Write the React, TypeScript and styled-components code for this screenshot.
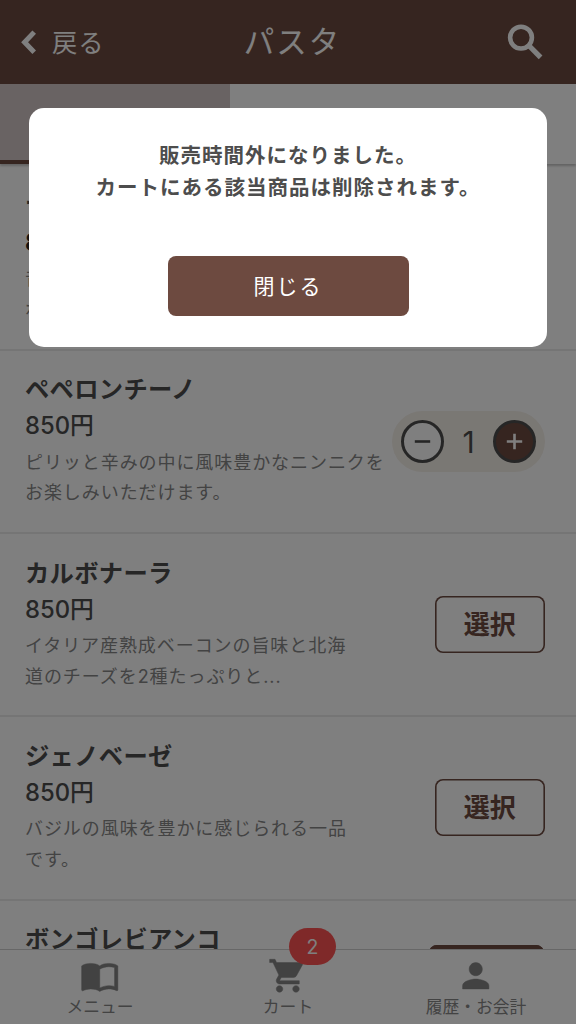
import React from "react";
import styled, { createGlobalStyle, css } from "styled-components";

const brown = "#6d4a40";
const ink = "#4d4d4d";

const GlobalStyle = createGlobalStyle`
  * { box-sizing: border-box; }
  body {
    margin: 0;
    background: #fff;
    color: ${ink};
    font-family: Inter, "Noto Sans CJK JP", sans-serif;
  }
  button { font: inherit; color: inherit; padding: 0; border: 0; background: none; }
`;

const Screen = styled.div`
  position: relative;
  width: 576px;
  height: 1024px;
  overflow: hidden;
  display: flex;
  flex-direction: column;
  background: #fff;
`;

const Header = styled.header`
  flex: none;
  height: 84px;
  display: grid;
  grid-template-columns: 150px 1fr 150px;
  align-items: center;
  padding: 0 21px;
  background: ${brown};
  color: #fff;
`;

const BackButton = styled.button`
  display: flex;
  align-items: center;
  gap: 16px;
  color: #fff;
  font-size: 25.3px;
  line-height: 36px;
  letter-spacing: 1px;
`;

const BackLabel = styled.span`
  padding-top: 2px;
`;

const Title = styled.h1`
  margin: 0;
  padding-left: 9px;
  text-align: center;
  font-size: 30.5px;
  line-height: 44px;
  font-weight: 400;
  letter-spacing: 2px;
`;

const SearchButton = styled.button`
  justify-self: end;
  display: flex;
  margin-right: 12px;
  color: #fff;
`;

const Tabs = styled.nav`
  flex: none;
  display: flex;
  height: 80px;
  box-shadow: 0 2px 2px rgba(0, 0, 0, 0.22);
`;

const Tab = styled.div<{ $active?: boolean }>`
  width: 230.4px;
  ${(p) => p.$active && css`
    background: #d3c7c7;
    border-bottom: 4px solid ${brown};
  `}
`;

const List = styled.main`
  flex: 1;
  min-height: 0;
  overflow: hidden;
  padding-top: 3.5px;
`;

const Item = styled.section`
  height: 183.3px;
  display: flex;
  justify-content: space-between;
  padding: 0 31px 0 25px;
  border-bottom: 2px solid #eaeaea;
`;

const Info = styled.div`
  flex: none;
  padding-top: 19.5px;
  white-space: nowrap;
`;

const Name = styled.h2`
  margin: 0;
  font-size: 24.3px;
  line-height: 38px;
  font-weight: 700;
  letter-spacing: 0.3px;
`;

const Price = styled.div<{ $strong?: boolean }>`
  font-size: 23.8px;
  line-height: 35.4px;
  font-weight: ${(p) => (p.$strong ? 700 : 450)};
  color: ${(p) => (p.$strong ? "#222" : ink)};
`;

const Description = styled.p`
  margin: 0;
  padding-top: 4px;
  font-size: 18px;
  line-height: 30.5px;
  letter-spacing: 0.93px;
  color: #868686;
`;

const Action = styled.div<{ $top?: number }>`
  flex: none;
  padding-top: ${(p) => p.$top ?? 61}px;
`;

const SelectButton = styled.button<{ $filled?: boolean }>`
  display: block;
  width: ${(p) => (p.$filled ? 115 : 110.5)}px;
  height: 57.5px;
  margin-right: ${(p) => (p.$filled ? 1.5 : 0)}px;
  border-radius: 8px;
  box-shadow: inset 0 0 0 1.6px ${brown};
  background: ${(p) => (p.$filled ? brown : "#fff")};
  color: ${(p) => (p.$filled ? "#fff" : brown)};
  font-size: 26px;
  font-weight: 700;
  line-height: 58px;
`;

const Stepper = styled.div`
  margin-left: -10px;
  width: 153px;
  height: 61px;
  display: flex;
  align-items: center;
  justify-content: space-between;
  padding: 0 9px;
  border-radius: 31px;
  background: #f5f0e9;
`;

const RoundButton = styled.button<{ $filled?: boolean }>`
  width: 43px;
  height: 43px;
  display: flex;
  align-items: center;
  justify-content: center;
  border: 3px solid ${ink};
  border-radius: 50%;
  background: ${(p) => (p.$filled ? brown : "#fff")};
  color: ${(p) => (p.$filled ? "#fff" : ink)};
`;

const Count = styled.span`
  padding-top: 2px;
  font-size: 30px;
  line-height: 44px;
`;

const BottomNav = styled.nav`
  flex: none;
  height: 75px;
  display: grid;
  grid-template-columns: repeat(3, 188px);
  justify-content: center;
  border-top: 1px solid #cfcfcf;
  background: #fff;
`;

const NavItem = styled.div`
  position: relative;
  display: flex;
  flex-direction: column;
  align-items: center;
  justify-content: flex-end;
  padding-bottom: 5px;
  color: #868686;
  font-size: 16.8px;
  line-height: 24px;
`;

const NavSvg = styled.svg`
  display: block;
  width: 39.5px;
  height: 39.5px;
  fill: #848484;
  stroke: #848484;
  stroke-width: 0.3;
`;

const Badge = styled.span`
  position: absolute;
  top: -22px;
  left: 95px;
  width: 47px;
  height: 37px;
  border-radius: 19px;
  background: #ff5353;
  color: #fff;
  text-align: center;
  font-size: 19.5px;
  line-height: 38px;
`;

const Overlay = styled.div`
  position: absolute;
  inset: 0;
  display: flex;
  align-items: flex-start;
  justify-content: center;
  padding-top: 107.5px;
  background: rgba(0, 0, 0, 0.5);
`;

const Dialog = styled.div`
  width: 518.5px;
  height: 239.5px;
  display: flex;
  flex-direction: column;
  align-items: center;
  padding-top: 32.2px;
  border-radius: 15px;
  background: #fff;
`;

const Message = styled.p`
  margin: 0;
  text-align: center;
  font-size: 20.5px;
  line-height: 32.3px;
  font-weight: 700;
  letter-spacing: 1px;
  white-space: nowrap;
`;

const CloseButton = styled.button`
  margin-top: 52px;
  width: 241px;
  height: 60px;
  border-radius: 8px;
  background: ${brown};
  color: #fff;
  font-size: 21px;
  line-height: 61px;
  letter-spacing: 2px;
`;

type Food = {
  name: string;
  lines: string[];
  control: "none" | "stepper" | "select" | "filled";
  strong?: boolean;
};

const foods: Food[] = [
  { name: "ナポリタン", lines: ["昔ながらの", "ポークソーセージ"], control: "none", strong: true },
  { name: "ペペロンチーノ", lines: ["ピリッと辛みの中に風味豊かなニンニクを", "お楽しみいただけます。"], control: "stepper" },
  { name: "カルボナーラ", lines: ["イタリア産熟成ベーコンの旨味と北海", "道のチーズを2種たっぷりと..."], control: "select" },
  { name: "ジェノベーゼ", lines: ["バジルの風味を豊かに感じられる一品", "です。"], control: "select" },
  { name: "ボンゴレビアンコ", lines: [], control: "filled" },
];

const navPaths = {
  menu: "M21 5c-1.11-.35-2.33-.5-3.5-.5-1.95 0-4.05.4-5.5 1.5-1.45-1.1-3.55-1.5-5.5-1.5S2.45 4.9 1 6v14.65c0 .25.25.5.5.5.1 0 .15-.05.25-.05C3.1 20.45 5.05 20 6.5 20c1.95 0 4.05.4 5.5 1.5 1.35-.85 3.8-1.5 5.5-1.5 1.65 0 3.35.3 4.75 1.05.1.05.15.05.25.05.25 0 .5-.25.5-.5V6c-.6-.45-1.25-.75-2-1zm0 13.5c-1.1-.35-2.3-.5-3.5-.5-1.7 0-4.15.65-5.5 1.5V8c1.35-.85 3.8-1.5 5.5-1.5 1.2 0 2.4.15 3.5.5v11.5z",
  cart: "M7 18c-1.1 0-1.99.9-1.99 2S5.9 22 7 22s2-.9 2-2-.9-2-2-2zM1 2v2h2l3.6 7.59-1.35 2.45c-.16.28-.25.61-.25.96 0 1.1.9 2 2 2h12v-2H7.42c-.14 0-.25-.11-.25-.25l.03-.12.9-1.63h7.45c.75 0 1.41-.41 1.75-1.03l3.58-6.49c.08-.14.12-.31.12-.48 0-.55-.45-1-1-1H5.21l-.94-2H1zm16 16c-1.1 0-1.99.9-1.99 2s.89 2 1.99 2 2-.9 2-2-.9-2-2-2z",
  person: "M12 12c2.21 0 4-1.79 4-4s-1.79-4-4-4-4 1.79-4 4 1.79 4 4 4zm0 2c-2.67 0-8 1.34-8 4v2h16v-2c0-2.66-5.33-4-8-4z",
};

function NavIcon({ name }: { name: keyof typeof navPaths }) {
  return (
    <NavSvg viewBox="0 0 24 24">
      <path d={navPaths[name]} />
    </NavSvg>
  );
}

function Sign({ plus }: { plus?: boolean }) {
  return (
    <svg width="17" height="17" viewBox="0 0 17 17" fill="none" stroke="currentColor" strokeWidth="2.6">
      <path d={plus ? "M.8 8.5h15.4M8.5.8v15.4" : "M.8 8.5h15.4"} />
    </svg>
  );
}

function Control({ kind }: { kind: Food["control"] }) {
  if (kind === "none") return null;
  if (kind === "stepper") {
    return (
      <Action $top={60}>
        <Stepper>
          <RoundButton><Sign /></RoundButton>
          <Count>1</Count>
          <RoundButton $filled><Sign plus /></RoundButton>
        </Stepper>
      </Action>
    );
  }
  return (
    <Action $top={kind === "filled" ? 44.5 : 61.5}>
      <SelectButton $filled={kind === "filled"}>選択</SelectButton>
    </Action>
  );
}

export default function App() {
  return (
    <>
      <GlobalStyle />
      <Screen>
        <Header>
          <BackButton>
            <svg width="15" height="24" viewBox="0 0 15 24" fill="none" stroke="currentColor" strokeWidth="5">
              <path d="M13.2 2.1 3.6 12.2l9.6 10" />
            </svg>
            <BackLabel>戻る</BackLabel>
          </BackButton>
          <Title>パスタ</Title>
          <SearchButton>
            <svg width="36" height="36" viewBox="0 0 36 36" fill="none" stroke="currentColor">
              <circle cx="14" cy="13.6" r="10.9" strokeWidth="4.6" />
              <path d="M21.6 21.2 33.6 33.4" strokeWidth="5.2" />
            </svg>
          </SearchButton>
        </Header>
        <Tabs>
          <Tab $active />
          <Tab />
        </Tabs>
        <List>
          {foods.map((food) => (
            <Item key={food.name}>
              <Info>
                <Name>{food.name}</Name>
                <Price $strong={food.strong}>850円</Price>
                <Description>
                  {food.lines.map((line) => (
                    <React.Fragment key={line}>{line}<br /></React.Fragment>
                  ))}
                </Description>
              </Info>
              <Control kind={food.control} />
            </Item>
          ))}
        </List>
        <BottomNav>
          <NavItem><NavIcon name="menu" />メニュー</NavItem>
          <NavItem><NavIcon name="cart" />カート<Badge>2</Badge></NavItem>
          <NavItem><NavIcon name="person" />履歴・お会計</NavItem>
        </BottomNav>
        <Overlay>
          <Dialog>
            <Message>販売時間外になりました。<br />カートにある該当商品は削除されます。</Message>
            <CloseButton>閉じる</CloseButton>
          </Dialog>
        </Overlay>
      </Screen>
    </>
  );
}
